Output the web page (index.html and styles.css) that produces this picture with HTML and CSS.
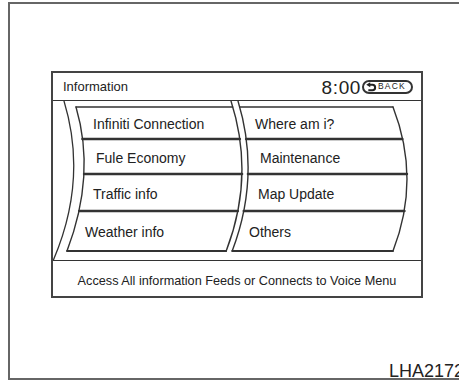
FILE: index.html
```html
<!DOCTYPE html>
<html lang="en">
<head>
<meta charset="utf-8">
<title>Information</title>
<link rel="stylesheet" href="styles.css">
</head>
<body>
<div class="sheet">
  <div class="screen">
    <div class="header">
      <span class="title">Information</span>
      <div class="status">
        <span class="clock">8:00</span>
        <span class="back">
          <svg class="back-icon" viewBox="0 -1 12 11" width="11" height="10" aria-hidden="true">
            <path d="M4 2 H7 A3 3 0 0 1 7 8 H2.5" fill="none" stroke="#222" stroke-width="2.2"/>
            <polygon points="0.2,2 4.6,-0.8 4.6,4.8" fill="#222"/>
          </svg>
          <span class="back-label">BACK</span>
        </span>
      </div>
    </div>
    <div class="menu">
      <svg class="lines" viewBox="53 101 368 159" width="368" height="159" aria-hidden="true">
        <g fill="none" stroke="#333" stroke-linecap="round">
          <path d="M64 101 Q88 180 53 261" stroke-width="1.3"/>
          <path d="M76 107 Q96 175 67 251" stroke-width="1.4"/>
          <path d="M231 101 Q255.1 176 226.2 251" stroke-width="1.4"/>
          <path d="M238 101 Q260.8 176 232.2 251" stroke-width="1.4"/>
          <path d="M393 107 Q421 179 393 251" stroke-width="1.4"/>
          <path d="M76 107 H232.7" stroke-width="1.3"/>
          <path d="M82.5 139 H239.8" stroke-width="2.6"/>
          <path d="M84.1 174 H242" stroke-width="2.6"/>
          <path d="M79.3 211 H237.8" stroke-width="2.6"/>
          <path d="M67 251 H226.2" stroke-width="1.8"/>
          <path d="M239.7 107 H393" stroke-width="1.3"/>
          <path d="M246.2 139 H402.3" stroke-width="2.6"/>
          <path d="M248 174 H406.9" stroke-width="2.6"/>
          <path d="M243.8 211 H404.4" stroke-width="2.6"/>
          <path d="M232.2 251 H393" stroke-width="1.8"/>
        </g>
      </svg>
      <div class="grid">
        <div class="item l1">Infiniti Connection</div>
        <div class="item r1">Where am i?</div>
        <div class="item l2">Fule Economy</div>
        <div class="item r2">Maintenance</div>
        <div class="item l3">Traffic info</div>
        <div class="item r3">Map Update</div>
        <div class="item l4">Weather info</div>
        <div class="item r4">Others</div>
      </div>
    </div>
    <div class="footer">Access All information Feeds or Connects to Voice Menu</div>
  </div>
  <div class="code">LHA2172</div>
</div>
</body>
</html>
```
FILE: styles.css
```css
html, body {
  margin: 0;
  padding: 0;
  overflow: hidden;
  background: #fff;
}

body {
  font-family: "Liberation Sans", Arial, sans-serif;
  color: #222;
}

.sheet {
  margin: 2px 0 0 8px;
  width: 480px;
  height: 378px;
  box-sizing: border-box;
  border: 2px solid #666;
  border-right: none;
  display: flex;
  flex-direction: column;
}

.screen {
  margin: 67px 0 0 41px;
  width: 372px;
  height: 227px;
  box-sizing: border-box;
  border: 2px solid #444;
  display: flex;
  flex-direction: column;
}

.header {
  height: 27px;
  border-bottom: 1px solid #333;
  display: flex;
  align-items: center;
  justify-content: space-between;
  padding: 0 8px 0 10px;
}

.title {
  font-size: 13px;
}

.status {
  display: flex;
  align-items: center;
  gap: 1px;
}

.clock {
  font-size: 19px;
  line-height: 1;
  letter-spacing: 0.6px;
  padding-top: 2px;
}

.back {
  display: inline-flex;
  align-items: center;
  gap: 1px;
  width: 51px;
  height: 14px;
  box-sizing: border-box;
  border: 2px solid #333;
  border-radius: 8px;
  padding-left: 2px;
}

.back-icon {
  display: block;
  flex: none;
}

.back-label {
  font-size: 8.5px;
  line-height: 1;
  letter-spacing: 1.2px;
}

.menu {
  position: relative;
  height: 159px;
}

.lines {
  position: absolute;
  left: 0;
  top: 0;
}

.grid {
  position: relative;
  display: grid;
  grid-template-columns: 183px 185px;
  grid-template-rows: 32px 35px 37px 40px;
  padding-top: 6px;
  font-size: 14px;
}

.item {
  display: flex;
  align-items: center;
  padding-top: 2px;
  white-space: nowrap;
}

.l1 { padding-left: 40px; }
.l2 { padding-left: 43px; }
.l3 { padding-left: 40px; }
.l4 { padding-left: 32px; }
.r1 { padding-left: 19px; }
.r2 { padding-left: 24px; }
.r3 { padding-left: 22px; }
.r4 { padding-left: 13px; }

.footer {
  flex: 1;
  border-top: 1px solid #333;
  display: flex;
  align-items: center;
  justify-content: center;
  font-size: 12.7px;
  padding-top: 4px;
}

.code {
  margin-top: auto;
  margin-left: 379px;
  margin-bottom: -2px;
  font-size: 18px;
  line-height: 17px;
  white-space: nowrap;
}
```
